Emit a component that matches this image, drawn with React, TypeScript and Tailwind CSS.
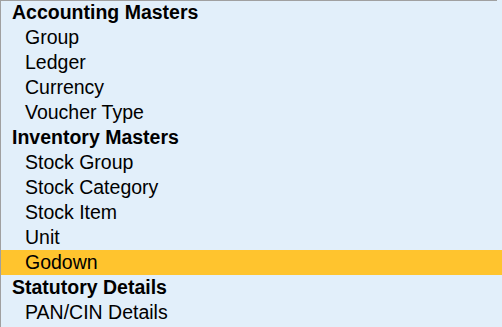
import React from 'react';

type Row = { label: string; heading?: boolean; active?: boolean };

const rows: Row[] = [
  { label: 'Accounting Masters', heading: true },
  { label: 'Group' },
  { label: 'Ledger' },
  { label: 'Currency' },
  { label: 'Voucher Type' },
  { label: 'Inventory Masters', heading: true },
  { label: 'Stock Group' },
  { label: 'Stock Category' },
  { label: 'Stock Item' },
  { label: 'Unit' },
  { label: 'Godown', active: true },
  { label: 'Statutory Details', heading: true },
  { label: 'PAN/CIN Details' },
];

export default function App() {
  return (
    <div className="w-[502px] h-[327px] bg-[#e2effa] border-l border-[#a0a0a0] relative overflow-hidden font-['Liberation_Sans',Arial,sans-serif] text-black">
      {/* top rule stops short of the right edge */}
      <div className="h-px w-[496px] bg-[#a0a0a0]" />
      <div className="flex flex-col -mt-px">
        {rows.map((r) => (
          <div
            key={r.label}
            className={
              'h-[25px] flex items-center pt-px text-[19.5px] leading-none ' +
              (r.heading ? 'pl-[11px] font-bold ' : 'pl-[24px] ') +
              (r.active ? 'bg-[#ffc42e]' : '')
            }
          >
            {r.label}
          </div>
        ))}
      </div>
    </div>
  );
}
